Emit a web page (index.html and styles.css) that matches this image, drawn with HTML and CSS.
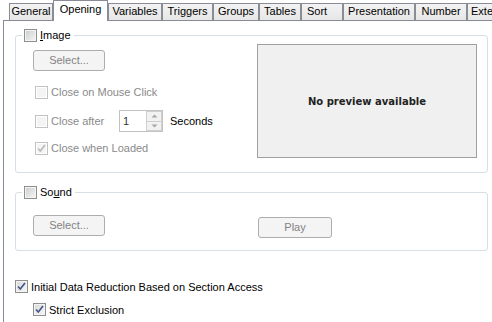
FILE: index.html
```html
<!DOCTYPE html>
<html>
<head>
<meta charset="utf-8">
<link rel="stylesheet" href="styles.css">
</head>
<body>
<div class="tabs">
  <div class="tab t-general">General</div>
  <div class="tab sel t-opening">Opening</div>
  <div class="tab t-variables">Variables</div>
  <div class="tab t-triggers">Triggers</div>
  <div class="tab t-groups">Groups</div>
  <div class="tab t-tables">Tables</div>
  <div class="tab t-sort">Sort</div>
  <div class="tab t-presentation">Presentation</div>
  <div class="tab t-number">Number</div>
  <div class="tab t-exter">Exter</div>
</div>
<div class="panel">
  <div class="group g-image">
    <div class="legend"><span class="cb"></span><span class="lbl"><u>I</u>mage</span></div>
    <div class="gbody">
      <div class="leftcol">
        <div class="btn dis b-select">Select...</div>
        <div class="row r1"><span class="cb dis"></span><span class="lbl dtext">Close on Mouse Click</span></div>
        <div class="row r2"><span class="cb dis"></span><span class="lbl dtext w-after">Close after</span>
          <div class="spin"><span class="spin-val">1</span><span class="spin-btns"><span class="sb up"><svg width="7" height="4" viewBox="0 0 7 4"><path d="M0.5 3.5 L3.5 0.5 L6.5 3.5 Z" fill="#a7a7a7"/></svg></span><span class="sb dn"><svg width="7" height="4" viewBox="0 0 7 4"><path d="M0.5 0.5 L3.5 3.5 L6.5 0.5 Z" fill="#a7a7a7"/></svg></span></span></div>
          <span class="lbl secs">Seconds</span>
        </div>
        <div class="row r3"><span class="cb dis"><svg width="11" height="11" viewBox="0 0 11 11"><path d="M2 5.5 L4.3 8 L9 2" fill="none" stroke="#b8b8b8" stroke-width="1.6"/></svg></span><span class="lbl dtext">Close when Loaded</span></div>
      </div>
      <div class="preview">No preview available</div>
    </div>
  </div>
  <div class="group g-sound">
    <div class="legend"><span class="cb"></span><span class="lbl">So<u>u</u>nd</span></div>
    <div class="gbody">
      <div class="leftcol">
        <div class="btn dis b-select2">Select...</div>
      </div>
      <div class="btn dis b-play">Play</div>
    </div>
  </div>
  <div class="row bot1"><span class="cb on"><svg width="11" height="11" viewBox="0 0 11 11"><path d="M2 5.5 L4.3 8 L9 2" fill="none" stroke="#44598c" stroke-width="1.7"/></svg></span><span class="lbl">Initial Data Reduction Based on Section Access</span></div>
  <div class="row bot2"><span class="cb on"><svg width="11" height="11" viewBox="0 0 11 11"><path d="M2 5.5 L4.3 8 L9 2" fill="none" stroke="#44598c" stroke-width="1.7"/></svg></span><span class="lbl">Strict Exclusion</span></div>
</div>
</body>
</html>
```
FILE: styles.css
```css
html, body {
  margin: 0;
  padding: 0;
  background: #ffffff;
  overflow: hidden;
}
body {
  width: 492px;
  height: 322px;
  font-family: "Liberation Sans", Arial, sans-serif;
  font-size: 11px;
  color: #000;
}
.tabs {
  display: flex;
  align-items: flex-end;
  height: 20px;
  padding-left: 9px;
  white-space: nowrap;
}
.tab {
  box-sizing: border-box;
  height: 17px;
  border: 1px solid #898c95;
  border-bottom: none;
  background: linear-gradient(#f3f3f3, #e6e6e6);
  line-height: 15px;
  text-align: center;
  flex: none;
  overflow: hidden;
}
.tab.sel {
  position: relative;
  z-index: 2;
  height: 21px;
  margin-bottom: -1px;
  background: #ffffff;
  line-height: 17px;
}
.t-general { width: 44px; }
.t-opening { width: 55px; }
.t-variables { width: 54px; }
.t-triggers { width: 51px; }
.t-groups { width: 46px; }
.t-tables { width: 42px; }
.t-sort { width: 42px; text-align: left; padding-left: 5px; }
.t-presentation { width: 72px; }
.t-number { width: 52px; }
.t-exter { width: 25px; text-align: left; padding-left: 3px; border-right: none; }

.panel {
  border-top: 1px solid #898c95;
  border-left: 1px solid #898c95;
  margin-left: 3px;
  width: 489px;
  height: 302px;
  box-sizing: border-box;
}
.group {
  box-sizing: border-box;
  width: 473px;
  margin-left: 11px;
  border: 1px solid #d5dfe5;
  border-radius: 3px;
}
.g-image { margin-top: 14px; height: 138px; }
.g-sound { margin-top: 19px; height: 59px; }
.legend {
  display: flex;
  align-items: center;
  gap: 3px;
  width: fit-content;
  height: 14px;
  margin: -8px 0 0 6px;
  padding: 0 3px 0 2px;
  background: #fff;
}
.gbody {
  display: flex;
  align-items: flex-start;
}
.leftcol {
  display: flex;
  flex-direction: column;
  padding-left: 17px;
}
.btn {
  box-sizing: border-box;
  width: 72px;
  height: 21px;
  border: 1px solid #adadad;
  border-radius: 3px;
  background: #f4f4f4;
  text-align: center;
  line-height: 19px;
  color: #838383;
}
.b-select { margin-top: 8px; }
.b-select2 { margin-top: 16px; }
.b-play { width: 74px; margin-top: 18px; margin-left: 153px; }

.row {
  display: flex;
  align-items: center;
  height: 22px;
}
.leftcol .row { margin-left: 2px; }
.r1 { margin-top: 10px; }
.r2 { margin-top: 7px; }
.r3 { margin-top: 5px; }
.lbl { margin-left: 3px; }
.legend .lbl { margin-left: 0; }
.dtext { color: #8a8a8a; }
.w-after { width: 68px; }
.secs { margin-left: 7px; }

.cb {
  box-sizing: border-box;
  width: 13px;
  height: 13px;
  flex: none;
  border: 1px solid #8e8f8f;
  background: linear-gradient(135deg, #cbcbcb, #f7f7f7);
  box-shadow: inset 0 0 0 1px #f4f4f4;
  display: flex;
  align-items: center;
  justify-content: center;
}
.cb.dis {
  border-color: #c2c2c2;
  background: #f4f4f4;
  box-shadow: inset 0 0 0 1px #ffffff;
}
.cb.on {
  background: linear-gradient(135deg, #d8d8d8, #f8f8f8);
}
.spin {
  box-sizing: border-box;
  display: flex;
  width: 44px;
  height: 22px;
  border: 1px solid #c3c3c3;
  flex: none;
}
.spin-val {
  flex: 1;
  padding-left: 3px;
  line-height: 20px;
  color: #333;
}
.spin-btns {
  display: flex;
  flex-direction: column;
  width: 16px;
}
.sb {
  flex: 1;
  box-sizing: border-box;
  border: 1px solid #cfcfcf;
  background: #f2f2f2;
  display: flex;
  align-items: center;
  justify-content: center;
}
.sb.dn { border-top: none; }

.preview {
  box-sizing: border-box;
  width: 220px;
  height: 114px;
  margin: 2px 10px 0 auto;
  border: 1px solid #a0a0a0;
  background: #f0f0f0;
  display: flex;
  align-items: center;
  justify-content: center;
  font-family: "DejaVu Sans", sans-serif;
  font-weight: bold;
  font-size: 10px;
  color: #222;
}
.bot1 { margin-top: 27px; margin-left: 11px; height: 17px; }
.bot2 { margin-top: 6px; margin-left: 29px; height: 17px; }
```
